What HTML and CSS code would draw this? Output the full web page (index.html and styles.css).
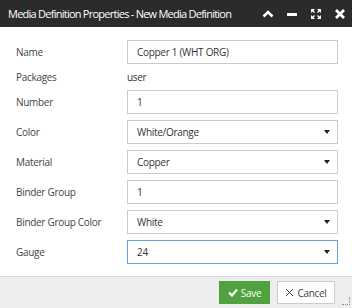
FILE: index.html
```html
<!DOCTYPE html>
<html lang="en">
<head>
    <meta charset="UTF-8">
    <meta name="viewport" content="width=device-width, initial-scale=1.0">
    <title>Media Definition Properties</title>
    <link rel="stylesheet" href="styles.css">
</head>
<body>

<div class="window">
    <div class="titlebar">
        <span class="title">Media Definition Properties - New Media Definition</span>
        <div class="tools">
            <svg width="12" height="12" viewBox="0 0 12 12"><path d="M1.5 8.5 L6 4 L10.5 8.5" fill="none" stroke="#fff" stroke-width="2.6"/></svg>
            <svg width="12" height="12" viewBox="0 0 12 12"><rect x="1" y="5" width="10" height="3" fill="#fff"/></svg>
            <svg width="12" height="12" viewBox="0 0 12 12">
                <path d="M1 1h4L1 5z M11 1H7l4 4z M1 11h4L1 7z M11 11H7l4-4z" fill="#fff"/>
                <path d="M2.5 2.5l2 2 M9.5 2.5l-2 2 M2.5 9.5l2-2 M9.5 9.5l-2-2" stroke="#fff" stroke-width="1.3"/>
            </svg>
            <svg width="12" height="12" viewBox="0 0 12 12"><path d="M2 2 L10 10 M10 2 L2 10" stroke="#fff" stroke-width="2.8"/></svg>
        </div>
    </div>

    <div class="content">
        <form class="props">
            <label>Name</label>
            <div class="field">Copper 1 (WHT ORG)</div>

            <label>Packages</label>
            <div class="plain">user</div>

            <label>Number</label>
            <div class="field">1</div>

            <label>Color</label>
            <div class="field select">White/Orange<span class="caret"></span></div>

            <label>Material</label>
            <div class="field select">Copper<span class="caret"></span></div>

            <label>Binder Group</label>
            <div class="field">1</div>

            <label>Binder Group Color</label>
            <div class="field select">White<span class="caret"></span></div>

            <label>Gauge</label>
            <div class="field select focus">24<span class="caret"></span></div>
        </form>
    </div>

    <div class="footer">
        <button class="btn save">
            <svg width="10" height="9" viewBox="0 0 10 9"><path d="M1 4.5 L4 7.5 L9 1.5" fill="none" stroke="#fff" stroke-width="2.2"/></svg>
            Save
        </button>
        <button class="btn cancel">
            <svg width="9" height="9" viewBox="0 0 9 9"><path d="M1 1 L8 8 M8 1 L1 8" stroke="#444" stroke-width="1"/></svg>
            Cancel
        </button>
        <span class="grip"></span>
    </div>
</div>

</body>
</html>
```

FILE: styles.css
```css
body {
    margin: 0;
    font-family: "Open Sans", Arial, sans-serif;
    background: #fff;
}

.window {
    width: 352px;
    height: 308px;
    display: flex;
    flex-direction: column;
    position: relative;
}

.titlebar {
    height: 27px;
    background: #2b2b2b;
    color: #fff;
    display: flex;
    align-items: center;
    justify-content: space-between;
    padding: 0 8px;
}

.title {
    font-size: 11px;
    letter-spacing: -0.75px;
}

.tools {
    display: flex;
    gap: 12px;
    margin-right: -2px;
}

.tools svg {
    display: block;
}

.content {
    flex: 1;
    padding: 13px 14px 0 16px;
}

.props {
    display: grid;
    grid-template-columns: 111px 1fr;
    row-gap: 6px;
    align-items: center;
}

.props label {
    font-size: 10px;
    letter-spacing: -0.3px;
    color: #444;
}

.field {
    height: 24px;
    box-sizing: border-box;
    border: 1px solid #ccc;
    padding: 0 9px;
    font-size: 10px;
    letter-spacing: -0.3px;
    color: #333;
    display: flex;
    align-items: center;
    justify-content: space-between;
}

.field.focus {
    border-color: #66a3dd;
}

.plain {
    font-size: 10px;
    letter-spacing: -0.3px;
    color: #333;
    height: 14px;
    line-height: 14px;
}

.caret {
    width: 0;
    height: 0;
    border-left: 3.5px solid transparent;
    border-right: 3.5px solid transparent;
    border-top: 4px solid #222;
    margin-right: -2px;
}

.footer {
    height: 31px;
    background: #eee;
    border-top: 1px solid #ddd;
    display: flex;
    align-items: center;
    justify-content: flex-end;
    gap: 7px;
    padding: 0 17px 0 0;
}

.btn {
    height: 23px;
    font-family: "Open Sans", Arial, sans-serif;
    font-size: 10px;
    letter-spacing: -0.3px;
    display: flex;
    align-items: center;
    gap: 3px;
    border-radius: 0;
    cursor: pointer;
}

.save {
    width: 51px;
    background: #4fa23d;
    color: #fff;
    border: none;
    justify-content: center;
}

.cancel {
    width: 58px;
    background: #fff;
    color: #444;
    border: 1px solid #ccc;
    justify-content: center;
}

.grip {
    position: absolute;
    right: 2px;
    bottom: 3px;
    width: 7px;
    height: 7px;
    border-right: 1px dotted #888;
    border-bottom: 1px dotted #888;
}
```
